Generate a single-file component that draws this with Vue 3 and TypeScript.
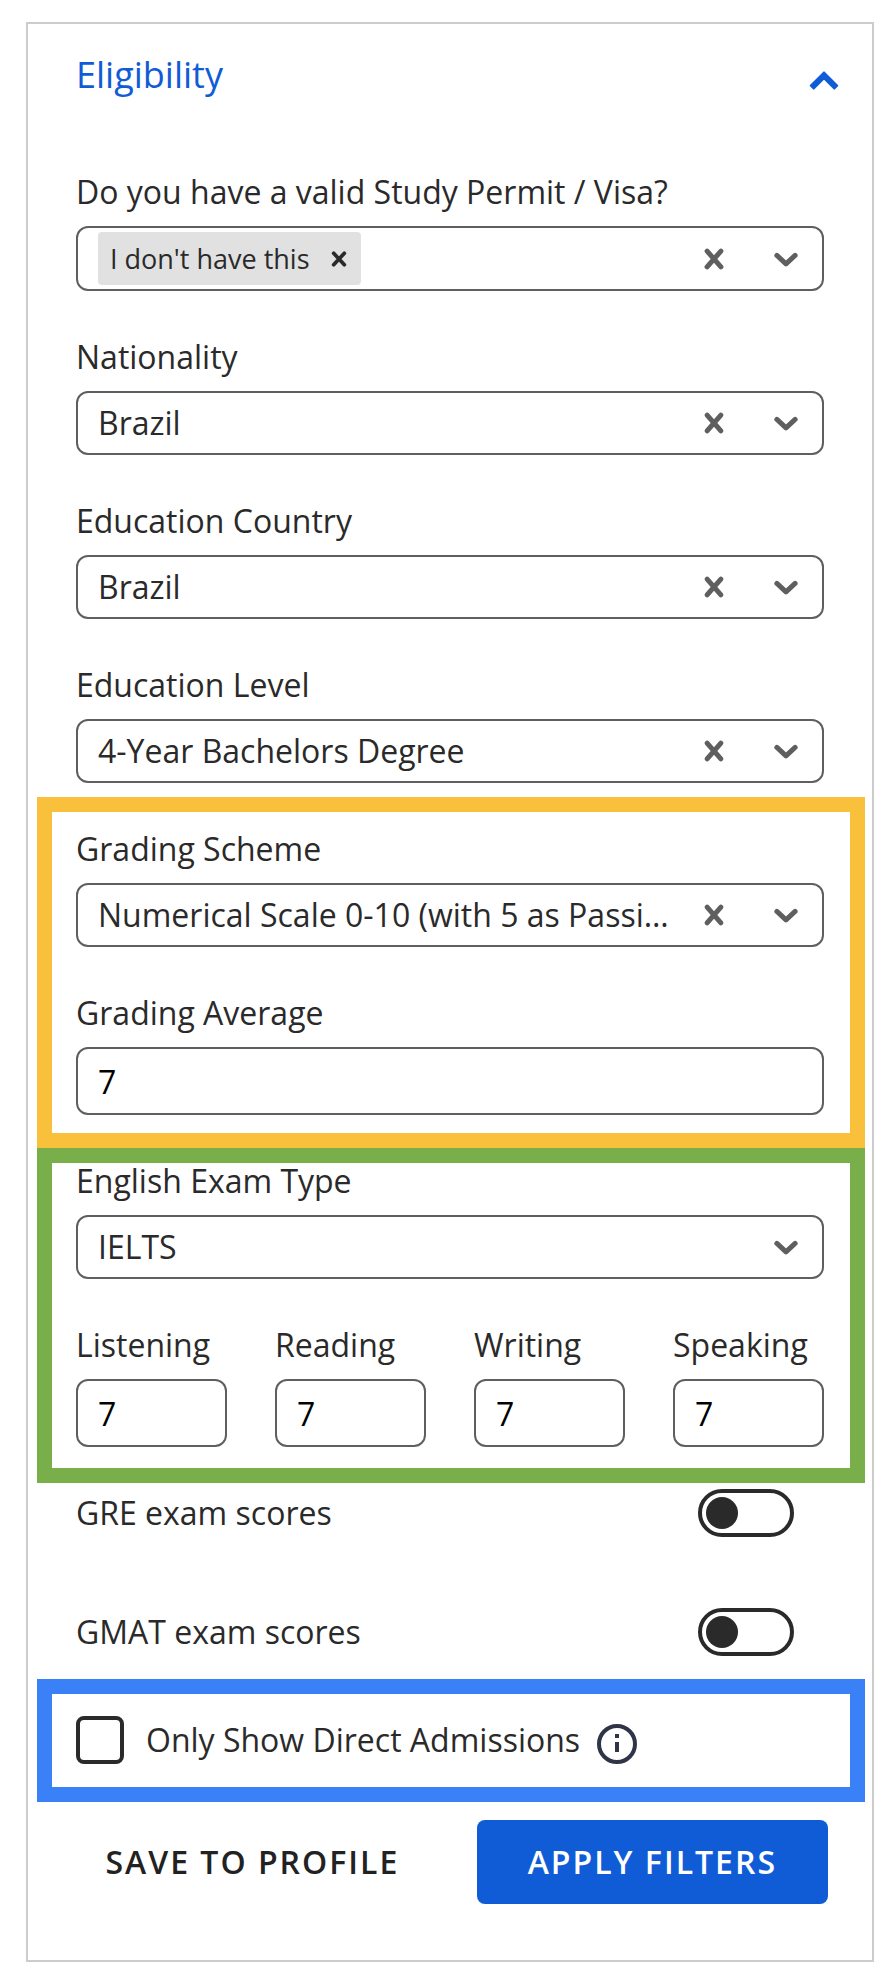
<script setup lang="ts">
import { reactive, ref } from 'vue'

interface SelectField {
  id: string
  label: string
  value: string
  options: string[]
  clearable: boolean
}

interface TextField {
  id: string
  label: string
  value: string
}

interface SwitchField {
  id: string
  label: string
  on: boolean
}

const open = ref(true)
const permits = ref<string[]>(["I don't have this"])
const permitQuery = ref('')
const directOnly = ref(false)

const background = reactive<SelectField[]>([
  { id: 'nationality', label: 'Nationality', value: 'Brazil', options: ['Brazil'], clearable: true },
  { id: 'edu-country', label: 'Education Country', value: 'Brazil', options: ['Brazil'], clearable: true },
  {
    id: 'edu-level',
    label: 'Education Level',
    value: '4-Year Bachelors Degree',
    options: ['4-Year Bachelors Degree'],
    clearable: true,
  },
])

const grading = reactive<SelectField[]>([
  {
    id: 'grading-scheme',
    label: 'Grading Scheme',
    value: 'Numerical Scale 0-10 (with 5 as Passing Grade)',
    options: ['Numerical Scale 0-10 (with 5 as Passing Grade)'],
    clearable: true,
  },
])

const exam = reactive<SelectField[]>([
  { id: 'exam-type', label: 'English Exam Type', value: 'IELTS', options: ['IELTS'], clearable: false },
])

const average = ref('7')

const scores = reactive<TextField[]>([
  { id: 'listening', label: 'Listening', value: '7' },
  { id: 'reading', label: 'Reading', value: '7' },
  { id: 'writing', label: 'Writing', value: '7' },
  { id: 'speaking', label: 'Speaking', value: '7' },
])

const switches = reactive<SwitchField[]>([
  { id: 'gre', label: 'GRE exam scores', on: false },
  { id: 'gmat', label: 'GMAT exam scores', on: false },
])

const groups = [
  { name: 'plain', fields: background },
  { name: 'grading', fields: grading },
  { name: 'exam', fields: exam },
]
</script>

<template>
  <main class="page">
    <form class="card" @submit.prevent>
      <h2 class="heading">
        <button type="button" class="toggle" :aria-expanded="open" @click="open = !open">
          <span>Eligibility</span>
          <svg class="caret" :class="{ closed: !open }" viewBox="0 0 32 37" aria-hidden="true">
            <path d="M16 10.4 29.3 23.6 26.3 26.6 16 16.2 5.7 26.6 2.7 23.6Z" />
          </svg>
        </button>
      </h2>

      <div v-show="open" class="fields">
        <div class="field">
          <label for="permit">Do you have a valid Study Permit / Visa?</label>
          <div class="control multi">
            <span v-for="p in permits" :key="p" class="tag">
              {{ p }}
              <button type="button" :aria-label="`Remove ${p}`" @click="permits = permits.filter((x) => x !== p)">
                <svg class="tag-x" viewBox="0 0 24 24" aria-hidden="true">
                  <path d="M4.9 4.4 19.1 19.6M19.1 4.4 4.9 19.6" />
                </svg>
              </button>
            </span>
            <input id="permit" v-model="permitQuery" class="query" type="text" autocomplete="off" />
            <button type="button" class="clear" aria-label="Clear study permit" @click="permits = []">
              <svg class="icon" viewBox="0 0 24 24" aria-hidden="true">
                <path d="M5.1 4.1 18.9 19.9M18.9 4.1 5.1 19.9" />
              </svg>
            </button>
            <svg class="icon arrow" viewBox="0 0 24 24" aria-hidden="true">
              <path d="M2.9 8.4 12 16.8 21.1 8.4" />
            </svg>
          </div>
        </div>

        <section v-for="g in groups" :key="g.name" class="group" :class="g.name">
          <div v-for="f in g.fields" :key="f.id" class="field">
            <label :for="f.id">{{ f.label }}</label>
            <div class="control single">
              <select :id="f.id" v-model="f.value">
                <option v-for="o in f.options" :key="o" :value="o">{{ o }}</option>
              </select>
              <button
                v-if="f.clearable"
                type="button"
                class="clear"
                :aria-label="`Clear ${f.label}`"
                @click="f.value = ''"
              >
                <svg class="icon" viewBox="0 0 24 24" aria-hidden="true">
                  <path d="M5.1 4.1 18.9 19.9M18.9 4.1 5.1 19.9" />
                </svg>
              </button>
              <svg class="icon arrow" viewBox="0 0 24 24" aria-hidden="true">
                <path d="M2.9 8.4 12 16.8 21.1 8.4" />
              </svg>
            </div>
          </div>

          <div v-if="g.name === 'grading'" class="field">
            <label for="average">Grading Average</label>
            <input id="average" v-model="average" class="control number" type="text" inputmode="decimal" />
          </div>

          <div v-if="g.name === 'exam'" class="scores">
            <div v-for="s in scores" :key="s.id" class="field">
              <label :for="s.id">{{ s.label }}</label>
              <input :id="s.id" v-model="s.value" class="control number" type="text" inputmode="decimal" />
            </div>
          </div>
        </section>
      </div>

      <div class="switches">
        <div v-for="s in switches" :key="s.id" class="switch-row">
          <label :for="s.id">{{ s.label }}</label>
          <input :id="s.id" v-model="s.on" class="switch" type="checkbox" role="switch" />
        </div>
      </div>

      <div class="group direct">
        <input id="direct" v-model="directOnly" class="check" type="checkbox" />
        <label for="direct">Only Show Direct Admissions</label>
        <button type="button" class="info" aria-label="About direct admissions">
          <svg viewBox="0 0 40 40" aria-hidden="true">
            <circle cx="20" cy="20" r="18" />
            <path d="M18 10h4v4h-4zM18 18h4v10h-4z" />
          </svg>
        </button>
      </div>

      <div class="actions">
        <button type="button" class="btn save">SAVE TO PROFILE</button>
        <button type="submit" class="btn apply">APPLY FILTERS</button>
      </div>
    </form>
  </main>
</template>

<style>
body {
  margin: 0;
  background: #fff;
}
</style>

<style scoped>
* {
  box-sizing: border-box;
}

.page {
  padding: 22px 20px 18px 26px;
  font-family: 'Open Sans', 'Noto Sans', sans-serif;
  font-size: 32px;
  line-height: 44px;
  color: #2a2a2a;
}

button,
input,
select {
  margin: 0;
  padding: 0;
  border: 0;
  background: none;
  font: inherit;
  color: inherit;
}

button {
  cursor: pointer;
}

svg {
  display: block;
}

.card {
  padding: 27px 48px 56px;
  border: 2px solid #ccc;
}

.heading {
  margin: 0 -16px 71px 0;
  font-size: 36px;
  font-weight: 400;
  line-height: 48px;
}

.toggle {
  display: flex;
  align-items: flex-end;
  justify-content: space-between;
  width: 100%;
  color: #105cd6;
}

.caret {
  width: 32px;
  height: 37px;
  fill: currentColor;
  stroke: currentColor;
  stroke-width: 2;
  stroke-linejoin: round;
}

.caret.closed {
  transform: rotate(180deg);
}

.fields {
  display: flex;
  flex-direction: column;
  gap: 44px;
}

.group {
  position: relative;
  display: flex;
  flex-direction: column;
  gap: 44px;
}

/* Coloured frames lie over the form without taking up room in it */
.grading::after,
.exam::after,
.direct::after {
  content: '';
  position: absolute;
  right: -41px;
  left: -39px;
  border: 15px solid;
  pointer-events: none;
}

.grading::after {
  top: -30px;
  bottom: -33px;
  border-color: #f9c03c;
}

.exam::after {
  top: -11px;
  bottom: -36px;
  border-color: #79af4a;
}

.direct::after {
  top: -37px;
  bottom: -38px;
  border-color: #3a80f6;
}

.field {
  display: flex;
  flex-direction: column;
  gap: 12px;
  min-width: 0;
}

.control {
  border: 2px solid #5f5f5f;
  border-radius: 12px;
}

.single {
  display: grid;
  grid-template-columns: 1fr 72px 72px;
  align-items: center;
}

.single select {
  grid-area: 1 / 1 / 2 / -1;
  width: 100%;
  height: 60px;
  padding: 0 150px 0 20px;
  border-radius: 10px;
  appearance: none;
  text-overflow: ellipsis;
  white-space: nowrap;
  overflow: hidden;
}

.clear {
  display: grid;
  grid-area: 1 / 2;
  place-items: center;
  height: 60px;
}

.icon {
  width: 24px;
  height: 24px;
  fill: none;
  stroke: #5f5f5f;
  stroke-width: 5;
  stroke-linecap: round;
  stroke-linejoin: round;
}

.arrow {
  grid-area: 1 / 3;
  justify-self: center;
  pointer-events: none;
}

.multi {
  display: grid;
  grid-template-columns: auto 1fr 72px 72px;
  align-items: center;
  padding: 4px 0 4px 20px;
}

.multi .clear {
  grid-area: 1 / 3;
  height: 52px;
}

.multi .arrow {
  grid-area: 1 / 4;
}

.query {
  grid-area: 1 / 2;
  width: 100%;
  min-width: 0;
  outline: 0;
}

.tag {
  display: flex;
  align-items: center;
  height: 53px;
  padding-left: 12px;
  border-radius: 4px;
  background: #e1e1e1;
  font-size: 27px;
}

.tag button {
  display: grid;
  place-items: center;
  width: 44px;
  height: 52px;
  margin-left: 7px;
}

.tag-x {
  width: 18px;
  height: 18px;
  stroke: #2a2a2a;
  stroke-width: 5;
  stroke-linecap: round;
}

.number {
  width: 100%;
  height: 68px;
  padding: 0 20px;
  color: #000;
}

.scores {
  display: grid;
  grid-template-columns: repeat(4, minmax(0, 1fr));
  gap: 48px;
}

.switches {
  display: flex;
  flex-direction: column;
  gap: 71px;
  margin: 42px 0 60px;
}

.switch-row {
  display: flex;
  align-items: center;
  justify-content: space-between;
  padding-right: 30px;
}

.switch {
  display: flex;
  align-items: center;
  width: 96px;
  height: 48px;
  padding: 4px;
  border: 4px solid #2a2a2a;
  border-radius: 24px;
  appearance: none;
}

.switch::before {
  content: '';
  width: 32px;
  height: 32px;
  border-radius: 50%;
  background: #2a2a2a;
}

.switch:checked {
  justify-content: flex-end;
}

.group.direct {
  flex-direction: row;
  align-items: center;
  gap: 0;
}

.check {
  flex: none;
  width: 48px;
  height: 48px;
  margin-right: 22px;
  border: 4px solid #2a2a2a;
  border-radius: 8px;
  appearance: none;
}

.check:checked {
  background: #2a2a2a;
}

.info {
  align-self: flex-end;
  margin-left: 17px;
}

.info svg {
  width: 40px;
  height: 40px;
  fill: #2f3447;
}

.info circle {
  fill: none;
  stroke: #2f3447;
  stroke-width: 4;
}

.actions {
  display: flex;
  gap: 44px;
  margin: 56px -4px 0;
}

.btn {
  padding: 20px 51px;
  border-radius: 8px;
  font-weight: 600;
  letter-spacing: 2px;
  white-space: nowrap;
}

.save {
  flex: 1;
  padding: 20px 0;
  color: #222;
}

.apply {
  background: #105cd6;
  color: #fff;
}
</style>
